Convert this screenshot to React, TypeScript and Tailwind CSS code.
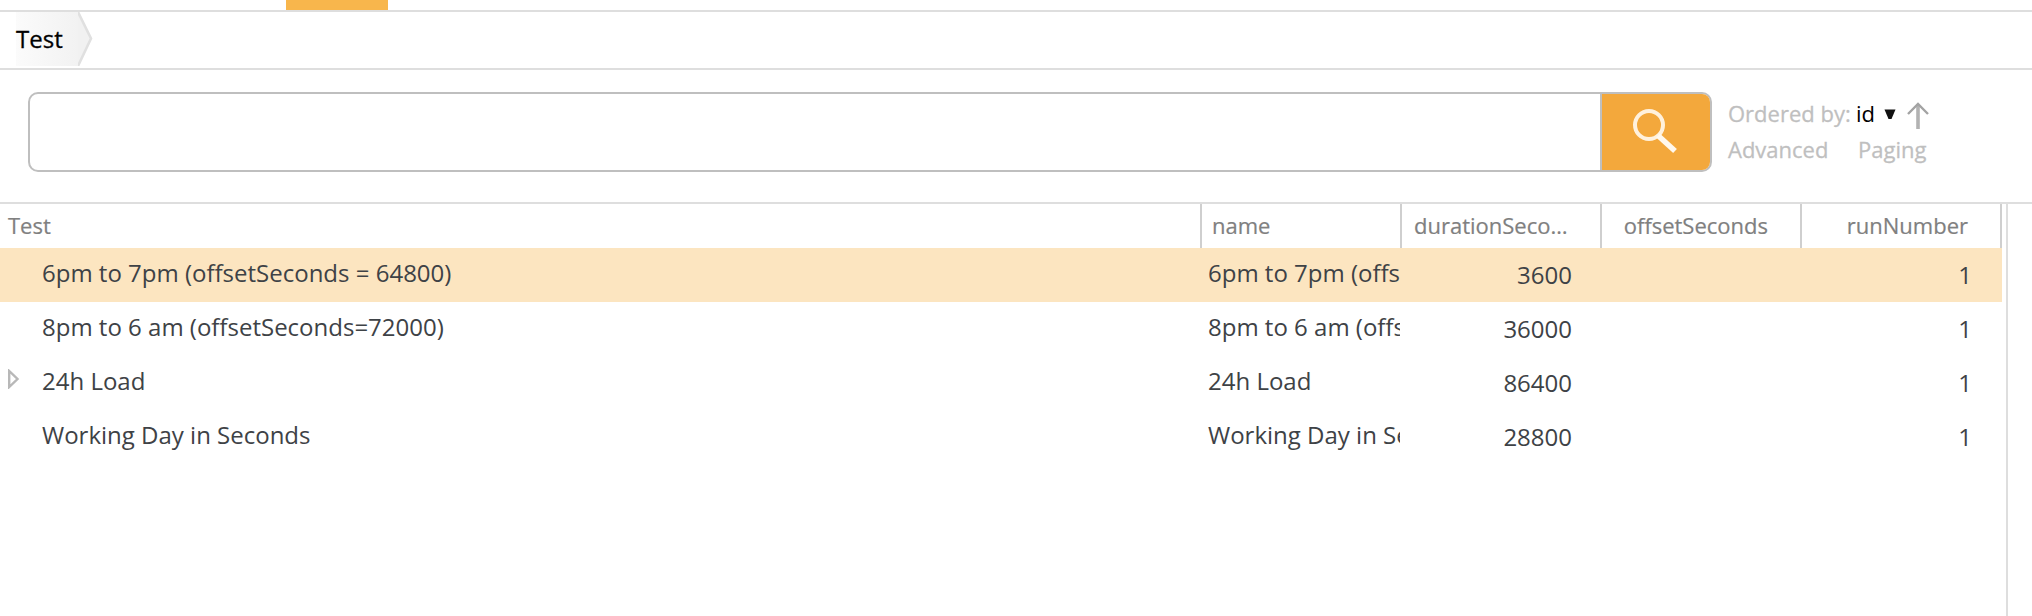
const columns = ["name", "durationSeconds", "offsetSeconds", "runNumber"];

const rows = [
  { label: "6pm to 7pm (offsetSeconds = 64800)", duration: 3600, run: 1, selected: true, expandable: false },
  { label: "8pm to 6 am (offsetSeconds=72000)", duration: 36000, run: 1, selected: false, expandable: false },
  { label: "24h Load", duration: 86400, run: 1, selected: false, expandable: true },
  { label: "Working Day in Seconds", duration: 28800, run: 1, selected: false, expandable: false },
];

const grid = "grid w-[2002px] grid-cols-[1202px_200px_200px_200px_200px]";

function Breadcrumb() {
  return (
    <nav className="flex h-[60px] border-y-2 border-[#dedede] pl-4">
      <div className="h-[54px] w-[62px] bg-linear-to-r from-[#fbfbfb] to-[#f2f2f2] text-2xl leading-[54px] font-medium text-black [-webkit-text-stroke:0.3px_#000]">
        Test
      </div>
      <svg width="15" height="54" viewBox="0 0 15 54" fill="none">
        <path d="M0 0L13 26.500L0 54Z" fill="#f1f1f1" />
        <path d="M0 0L13 26.500L0 54" stroke="#e0e0e0" strokeWidth="2.600" />
      </svg>
    </nav>
  );
}

function SearchBar() {
  return (
    <section className="flex h-[132px] pt-[22px] pl-7">
      <div className="flex h-20 w-[1684px] overflow-hidden rounded-[10px] border-2 border-[#bfbfbf]">
        <input aria-label="Search" className="min-w-0 flex-1 outline-none" />
        <button aria-label="Run search" className="h-full w-[110px] border-l-2 border-[#bfbfbf] bg-[#f3a83c]">
          <svg width="108" height="76" viewBox="0 0 108 76" fill="none">
            <circle cx="47" cy="31" r="14" stroke="#fff1dc" strokeWidth="4" />
            <path d="M56 41.500L73 57" stroke="#fff8ed" strokeWidth="5.500" />
          </svg>
        </button>
      </div>
      <div className="pt-[3px] pl-4 text-[22px] leading-9 text-[#bfbfbf] [-webkit-text-stroke:0.3px_#bfbfbf]">
        <div className="flex items-center">
          <span className="w-32 whitespace-nowrap">Ordered by:</span>
          <span className="w-7 text-black [-webkit-text-stroke:0px]">id</span>
          <svg width="46" height="36" viewBox="0 0 46 36" fill="none">
            <path d="M0.500 14.500H11.500L7.500 24H4.500Z" fill="#111" />
            <path d="M34 34V9" stroke="#b2b2b2" strokeWidth="3.600" />
            <path d="M24 19L34 9L44 19" stroke="#a3a3a3" strokeWidth="2.400" />
          </svg>
        </div>
        <div className="flex">
          <span className="w-[130px]">Advanced</span>
          <span>Paging</span>
        </div>
      </div>
    </section>
  );
}

export default function App() {
  return (
    <div className="flex h-[616px] w-[2032px] flex-col overflow-hidden bg-white font-['Open_Sans',sans-serif]">
      <div className="h-2.5 shrink-0 pl-[286px]">
        <div className="h-full w-[102px] bg-[#f8b64c]" />
      </div>
      <Breadcrumb />
      <SearchBar />
      <main className="flex flex-1 border-t-2 border-[#dedede]">
        <div className="w-[2008px] border-r-2 border-[#dedede]">
          <div className={grid + " h-11 text-[22px] leading-[42px] text-[#808080] [-webkit-text-stroke:0.2px_#808080]"}>
            <div className="border-r-2 border-[#cfcfcf] pl-2">Test</div>
            {columns.map((name, i) => (
              <div
                key={name}
                className={
                  "overflow-hidden border-r-2 border-[#cfcfcf] " +
                  (i === 0 ? "pl-2.5" : "pr-8 pl-3 text-right")
                }
              >
                {i === 1 ? <span className="block truncate text-left">{name}</span> : name}
              </div>
            ))}
          </div>
          {rows.map((row) => (
            <div
              key={row.label}
              className={
                grid + " h-[54px] text-2xl leading-[54px] whitespace-nowrap text-[#3e4246]" +
                (row.selected ? " bg-[#fce5c0]" : "")
              }
            >
              <div className="flex h-[50px] items-center pl-2">
                <div className="w-[34px] pb-1">
                  {row.expandable && (
                    <svg className="block" width="12" height="20" viewBox="0 0 12 20" fill="none">
                      <path d="M1.200 2V18L9.500 10Z" stroke="#b8b8b8" strokeWidth="2.400" />
                    </svg>
                  )}
                </div>
                <span>{row.label}</span>
              </div>
              <div className="mr-0.5 h-[54px] overflow-hidden pl-1.5 leading-[50px]">{row.label}</div>
              <div className="pr-[30px] text-right">{row.duration}</div>
              <div />
              <div className="pr-[30px] text-right">{row.run}</div>
            </div>
          ))}
        </div>
      </main>
    </div>
  );
}
